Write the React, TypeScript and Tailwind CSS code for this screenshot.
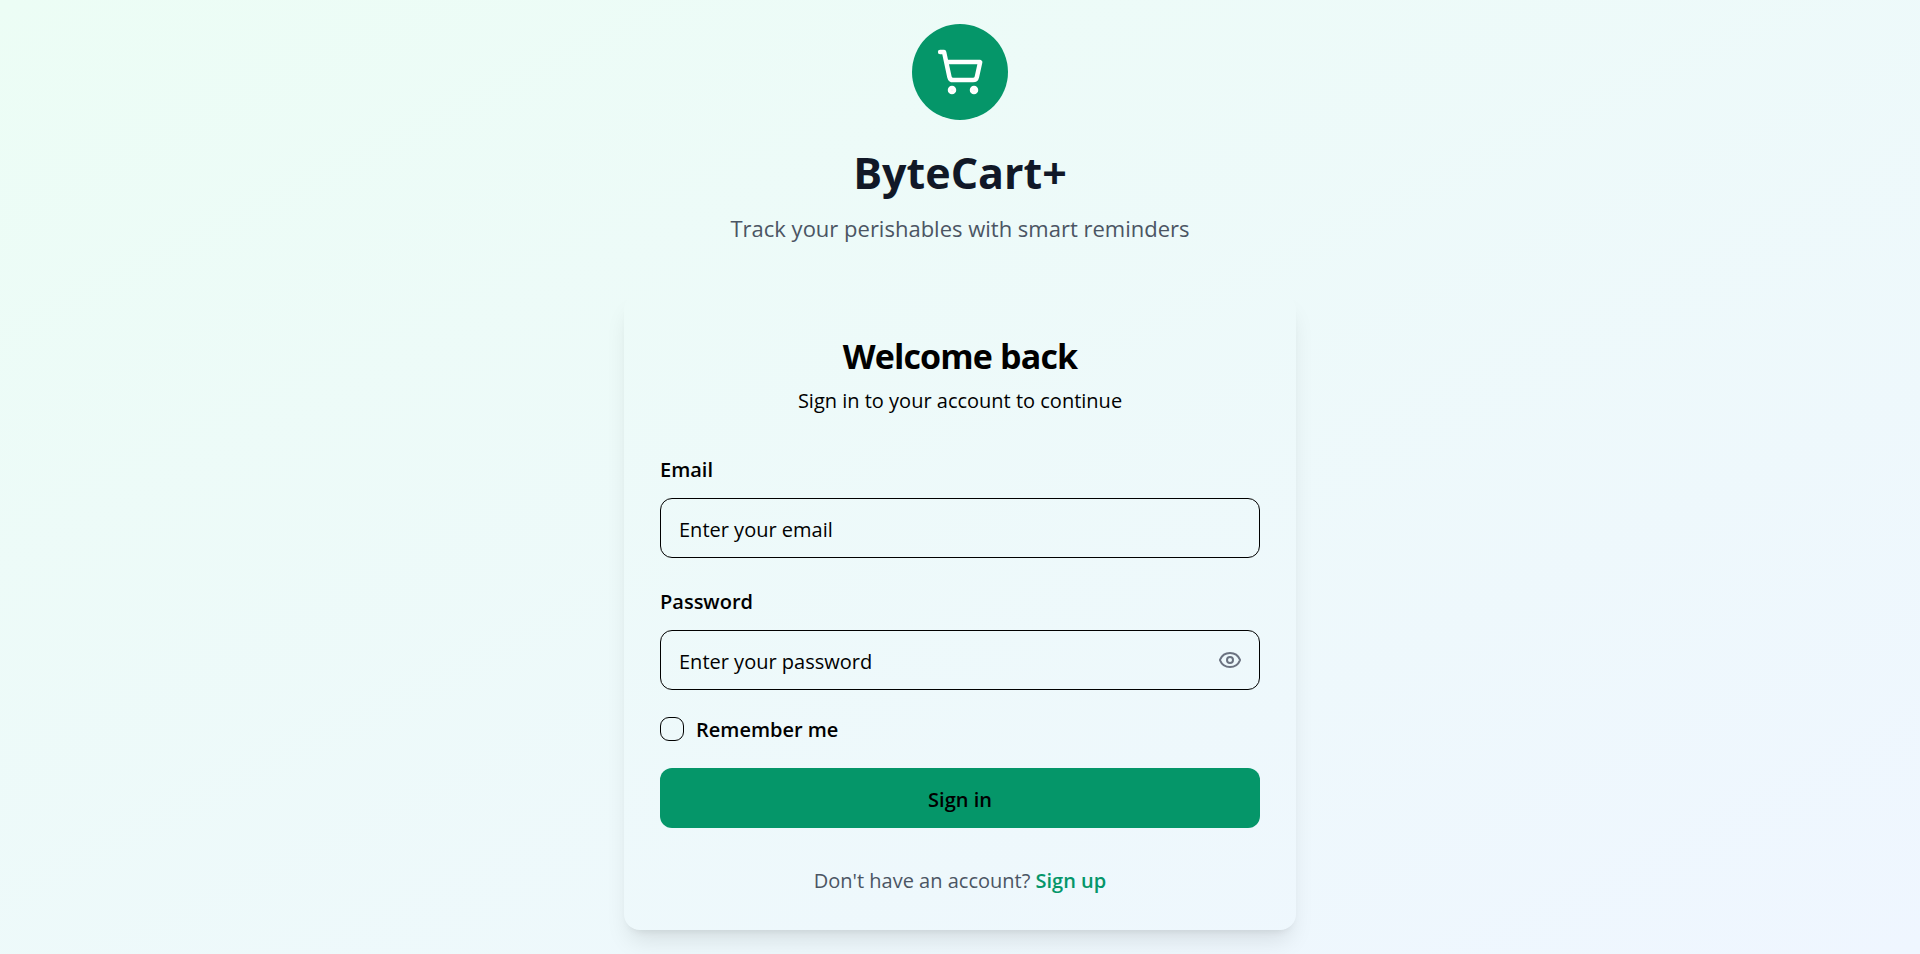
import { useState } from "react";
import { Eye, EyeOff, ShoppingCart } from "lucide-react";

const inputClass =
  "h-[60px] w-full rounded-xl border border-black bg-transparent px-[18px] pt-0.5 text-[20px] text-black placeholder:text-black placeholder:opacity-100 focus:outline-none focus:ring-2 focus:ring-emerald-600";

export default function App() {
  const [showPassword, setShowPassword] = useState(false);

  return (
    <main className="flex min-h-screen flex-col items-center justify-center bg-linear-to-br/srgb from-[#ecfdf5] to-[#eff6ff] p-6 font-['Open_Sans',sans-serif] text-black">
      <div className="w-full max-w-2xl">
        <header className="mb-12 text-center">
          <div className="mx-auto mb-6 flex size-24 items-center justify-center rounded-full bg-[#059669]">
            <ShoppingCart className="size-12 text-white" strokeWidth={2.25} aria-hidden="true" />
          </div>
          <h1 className="mb-2 text-[43px] leading-[58px] font-bold text-[#111827]">ByteCart+</h1>
          <p className="text-[22px] leading-9 text-[#4b5563]">Track your perishables with smart reminders</p>
        </header>

        <section className="rounded-2xl px-9 pt-9 pb-8 shadow-[0_15px_23px_-5px_rgba(0,0,0,0.1),0_6px_9px_-6px_rgba(0,0,0,0.1)]">
          <div className="mb-8 flex flex-col gap-0.5 text-center">
            <h2 className="text-[34px] leading-[52px] font-bold tracking-tight">Welcome back</h2>
            <p className="text-[20px] leading-[34px]">Sign in to your account to continue</p>
          </div>

          <form className="flex flex-col gap-6" onSubmit={(event) => event.preventDefault()}>
            <div className="flex flex-col gap-2">
              <label htmlFor="email" className="text-[20px] leading-10 font-semibold">
                Email
              </label>
              <input id="email" type="email" placeholder="Enter your email" className={inputClass} />
            </div>

            <div className="flex flex-col gap-2">
              <label htmlFor="password" className="text-[20px] leading-10 font-semibold">
                Password
              </label>
              <div className="relative">
                <input
                  id="password"
                  type={showPassword ? "text" : "password"}
                  placeholder="Enter your password"
                  className={inputClass}
                />
                <button
                  type="button"
                  aria-label={showPassword ? "Hide password" : "Show password"}
                  onClick={() => setShowPassword(!showPassword)}
                  className="absolute inset-y-0 right-0 flex items-center px-[18px] text-[#6b7280]"
                >
                  {showPassword ? <EyeOff className="size-6" /> : <Eye className="size-6" />}
                </button>
              </div>
            </div>

            <div className="flex items-center gap-3">
              <input
                id="remember"
                type="checkbox"
                className="size-6 appearance-none rounded-[9px] border border-black checked:bg-[#059669]"
              />
              <label htmlFor="remember" className="pt-0.5 text-[20px] leading-7 font-semibold">
                Remember me
              </label>
            </div>

            <button type="submit" className="h-[60px] w-full rounded-xl bg-[#059669] pt-1 text-[20px] font-semibold">
              Sign in
            </button>
          </form>

          <p className="mt-9 text-center text-[20px] leading-[34px] text-[#4b5563]">
            Don't have an account?{" "}
            <a href="#signup" className="font-semibold text-[#059669]">
              Sign up
            </a>
          </p>
        </section>
      </div>
    </main>
  );
}
